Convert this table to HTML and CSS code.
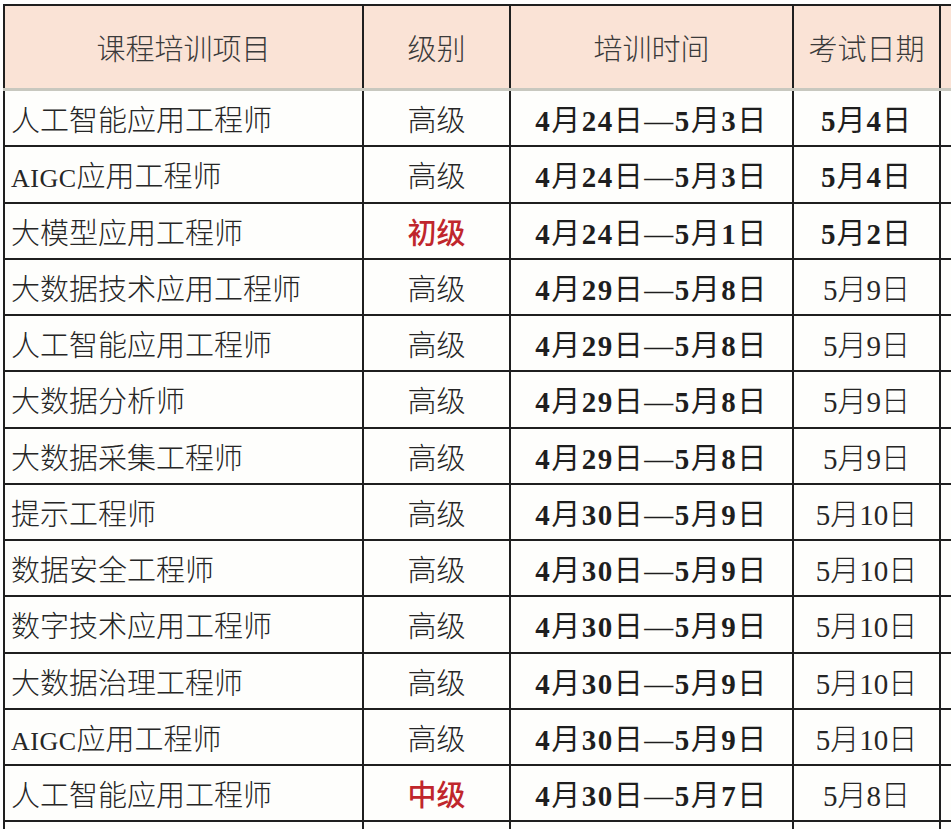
FILE: index.html
```html
<!DOCTYPE html>
<html lang="zh-CN">
<head>
<meta charset="utf-8">
<title>课程培训安排</title>
<link rel="stylesheet" href="styles.css">
</head>
<body>
<table class="sheet">
  <colgroup>
    <col class="c-name"><col class="c-level"><col class="c-time"><col class="c-exam"><col class="c-extra">
  </colgroup>
  <thead>
    <tr>
      <th>课程培训项目</th><th>级别</th><th>培训时间</th><th>考试日期</th><th></th>
    </tr>
  </thead>
  <tbody>
    <tr><td class="name">人工智能应用工程师</td><td class="level">高级</td><td class="time">4<span class="u">月</span>24<span class="u">日—</span>5<span class="u">月</span>3<span class="u">日</span></td><td class="exam strong">5<span class="u">月</span>4<span class="u">日</span></td><td></td></tr>
    <tr><td class="name"><span class="latin">AIGC</span>应用工程师</td><td class="level">高级</td><td class="time">4<span class="u">月</span>24<span class="u">日—</span>5<span class="u">月</span>3<span class="u">日</span></td><td class="exam strong">5<span class="u">月</span>4<span class="u">日</span></td><td></td></tr>
    <tr><td class="name">大模型应用工程师</td><td class="level red">初级</td><td class="time">4<span class="u">月</span>24<span class="u">日—</span>5<span class="u">月</span>1<span class="u">日</span></td><td class="exam strong">5<span class="u">月</span>2<span class="u">日</span></td><td></td></tr>
    <tr><td class="name">大数据技术应用工程师</td><td class="level">高级</td><td class="time">4<span class="u">月</span>29<span class="u">日—</span>5<span class="u">月</span>8<span class="u">日</span></td><td class="exam">5月9日</td><td></td></tr>
    <tr><td class="name">人工智能应用工程师</td><td class="level">高级</td><td class="time">4<span class="u">月</span>29<span class="u">日—</span>5<span class="u">月</span>8<span class="u">日</span></td><td class="exam">5月9日</td><td></td></tr>
    <tr><td class="name">大数据分析师</td><td class="level">高级</td><td class="time">4<span class="u">月</span>29<span class="u">日—</span>5<span class="u">月</span>8<span class="u">日</span></td><td class="exam">5月9日</td><td></td></tr>
    <tr><td class="name">大数据采集工程师</td><td class="level">高级</td><td class="time">4<span class="u">月</span>29<span class="u">日—</span>5<span class="u">月</span>8<span class="u">日</span></td><td class="exam">5月9日</td><td></td></tr>
    <tr><td class="name">提示工程师</td><td class="level">高级</td><td class="time">4<span class="u">月</span>30<span class="u">日—</span>5<span class="u">月</span>9<span class="u">日</span></td><td class="exam">5月10日</td><td></td></tr>
    <tr><td class="name">数据安全工程师</td><td class="level">高级</td><td class="time">4<span class="u">月</span>30<span class="u">日—</span>5<span class="u">月</span>9<span class="u">日</span></td><td class="exam">5月10日</td><td></td></tr>
    <tr><td class="name">数字技术应用工程师</td><td class="level">高级</td><td class="time">4<span class="u">月</span>30<span class="u">日—</span>5<span class="u">月</span>9<span class="u">日</span></td><td class="exam">5月10日</td><td></td></tr>
    <tr><td class="name">大数据治理工程师</td><td class="level">高级</td><td class="time">4<span class="u">月</span>30<span class="u">日—</span>5<span class="u">月</span>9<span class="u">日</span></td><td class="exam">5月10日</td><td></td></tr>
    <tr><td class="name"><span class="latin">AIGC</span>应用工程师</td><td class="level">高级</td><td class="time">4<span class="u">月</span>30<span class="u">日—</span>5<span class="u">月</span>9<span class="u">日</span></td><td class="exam">5月10日</td><td></td></tr>
    <tr><td class="name">人工智能应用工程师</td><td class="level red">中级</td><td class="time">4<span class="u">月</span>30<span class="u">日—</span>5<span class="u">月</span>7<span class="u">日</span></td><td class="exam">5月8日</td><td></td></tr>
    <tr><td class="name"></td><td class="level"></td><td class="time"></td><td class="exam"></td><td></td></tr>
  </tbody>
</table>
</body>
</html>
```
FILE: styles.css
```css
html, body {
  margin: 0;
  padding: 0;
  background: #ffffff;
  overflow: hidden;
}

body {
  width: 951px;
  height: 829px;
}

.sheet {
  margin: 4px 0 0 3px;
  border-collapse: collapse;
  table-layout: fixed;
  width: 1016px;
  font-family: "Noto Sans CJK SC", sans-serif;
  font-size: 29px;
  color: #262626;
}

.c-name { width: 359px; }
.c-level { width: 147px; }
.c-time { width: 283px; }
.c-exam { width: 147px; }
.c-extra { width: 80px; }

.sheet th,
.sheet td {
  border: 2px solid #1f1f1f;
  padding: 0;
  overflow: hidden;
  white-space: nowrap;
}

.sheet th {
  height: 82px;
  background: #fae3d6;
  font-weight: 300;
  color: #3a3a3a;
  text-align: center;
  border-bottom: 3px solid #c8c8bf;
}

.sheet td {
  height: 54.25px;
  background: #fefefc;
  font-weight: 300;
  text-align: center;
}

.sheet td.name {
  text-align: left;
  padding-left: 6px;
}

.latin {
  font-family: "Liberation Serif", serif;
  font-size: 26px;
  font-weight: 400;
  letter-spacing: 0.5px;
}

.sheet td.red {
  color: #c0262c;
  font-weight: 500;
}

.sheet td.time,
.sheet td.exam {
  font-family: "Liberation Serif", "Noto Sans CJK SC", serif;
}

.sheet td.time {
  font-weight: 700;
  letter-spacing: 1.5px;
  color: #1e1e1e;
}

.sheet td.exam.strong {
  font-weight: 700;
  color: #1e1e1e;
  letter-spacing: 1px;
}

.sheet td .u {
  font-weight: 400;
}
```
